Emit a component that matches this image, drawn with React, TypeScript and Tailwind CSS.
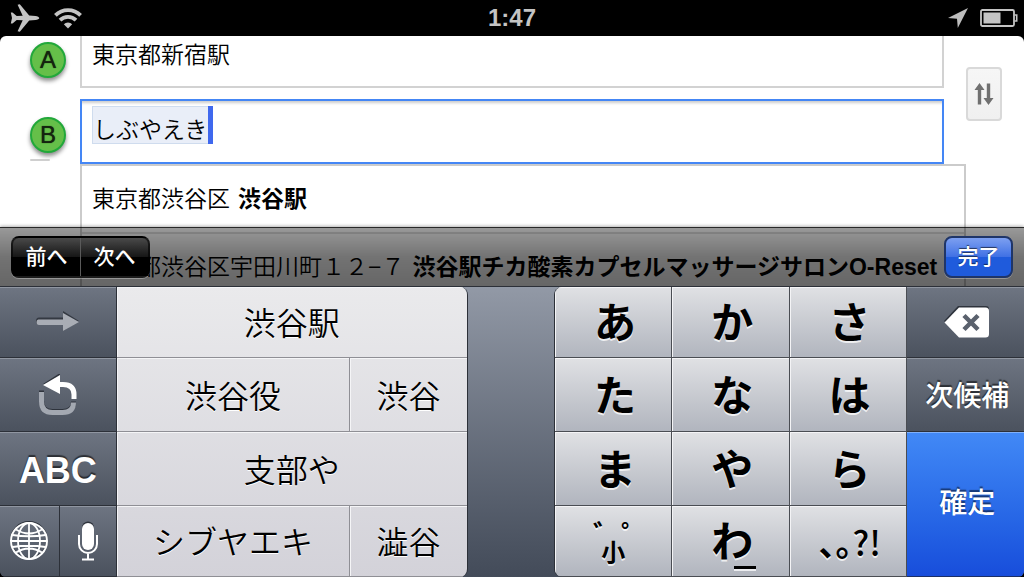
import { useState } from "react";
import type { ReactNode } from "react";
import { clsx } from "clsx";

const SUGGESTIONS = [
  { area: "東京都渋谷区", name: "渋谷駅" },
  {
    area: "東京都渋谷区宇田川町１２−７",
    name: "渋谷駅チカ酸素カプセルマッサージサロンO-Reset",
  },
];

const CANDIDATES = [
  { text: "渋谷駅", wide: true },
  { text: "渋谷役", wide: false },
  { text: "渋谷", wide: false },
  { text: "支部や", wide: true },
  { text: "シブヤエキ", wide: false },
  { text: "澁谷", wide: false },
];

const toneClass = {
  dark: "border-[#2c3038] bg-linear-to-b from-[#6e7582] to-[#4b525e] text-white shadow-[inset_0_1px_0_#9096a1] [text-shadow:0_-2px_1px_rgba(0,0,0,0.55)]",
  light:
    "border-[#4a4d53] bg-linear-to-b from-[#e0e1e4] to-[#b1b5be] text-black shadow-[inset_1px_1px_0_#f4f4f6] [text-shadow:0_2px_0_rgba(255,255,255,0.75)]",
  blue: "border-[#1b2f66] bg-linear-to-b from-[#4289f6] to-[#184ddb] text-white shadow-[inset_0_1px_0_#7fb0fb] [text-shadow:0_-2px_1px_rgba(0,0,0,0.5)]",
};

function Key({
  tone,
  className,
  label,
  children,
}: {
  tone: keyof typeof toneClass;
  className?: string;
  label?: string;
  children: ReactNode;
}) {
  return (
    <button
      type="button"
      aria-label={label}
      className={clsx(
        "relative flex items-center justify-center border-b",
        toneClass[tone],
        className
      )}
    >
      {children}
    </button>
  );
}

function AirplaneIcon() {
  return (
    <svg className="h-7 w-[30px]" viewBox="0 0 30 28" fill="#c4c4c4">
      <path d="M.8 8.500h1.700l4.200 3.400 6-.2L7.600.8 9.800.3l9.400 11.300 6.300.3c2 .2 3.800 1.100 3.800 2.100s-1.800 1.900-3.800 2.100l-6.300.3L9.800 27.700l-2.200-.5 5.100-10.900-6-.2-4.200 3.400H.8L2 14z" />
    </svg>
  );
}

function WifiIcon() {
  return (
    <svg className="h-[22px] w-7" viewBox="0 0 28 22">
      <g fill="none" stroke="#c4c4c4" strokeWidth="3.800">
        <path d="M1.400 8.300a17.800 17.800 0 0 1 25.200 0" />
        <path d="M6 13.200a11.300 11.300 0 0 1 16 0" />
      </g>
      <path d="M14 21.500l-4.200-4.200a5.900 5.900 0 0 1 8.400 0z" fill="#c4c4c4" />
    </svg>
  );
}

function StatusBar() {
  return (
    <header className="grid h-9 shrink-0 grid-cols-3 items-center bg-black px-1.5">
      <div className="flex items-center gap-3.5 pl-1">
        <AirplaneIcon />
        <WifiIcon />
      </div>
      <time className="text-center text-2xl font-bold text-[#c4c4c4]">1:47</time>
      <div className="flex items-center justify-end gap-3">
        <svg className="h-5 w-5" viewBox="0 0 20 20" fill="#bdbdbd">
          <path d="M20 0L9.800 20l-.8-9.300L0 10z" />
        </svg>
        <svg className="h-[18px] w-[38px]" viewBox="0 0 38 18">
          <rect x="1" y="1" width="33" height="16" rx="1.500" fill="none" stroke="#c4c4c4" strokeWidth="1.800" />
          <path d="M34.500 6h2.200v6h-2.200" fill="none" stroke="#c4c4c4" strokeWidth="1.600" />
          <rect x="3.500" y="3.500" width="17" height="11" fill="#c4c4c4" />
        </svg>
      </div>
    </header>
  );
}

function Marker({ letter }: { letter: string }) {
  return (
    <span className="flex size-9 items-center justify-center rounded-full border-2 border-[#22a83a] bg-[#65bf49] text-2xl text-[#14240f] shadow-[0_3px_4px_rgba(0,0,0,0.45)] [text-shadow:0_0_1px_#14240f]">
      {letter}
    </span>
  );
}

function RouteForm() {
  const [from, setFrom] = useState("東京都新宿駅");
  const [to, setTo] = useState("しぶやえき");

  return (
    <form className="flex text-[23px] font-[350]">
      <div className="min-w-0 flex-1">
        <div className="flex">
          <label htmlFor="from" className="flex w-20 justify-center pt-1.5 pl-4">
            <Marker letter="A" />
          </label>
          <input
            id="from"
            value={from}
            onChange={(e) => setFrom(e.target.value)}
            className="h-[52px] min-w-0 flex-1 border-2 border-t-0 border-[#d2d2d2] pb-4 pl-2.5 outline-none"
          />
        </div>
        <div className="mt-[11px] flex">
          <label htmlFor="to" className="flex w-20 flex-col items-center pt-[18px] pl-4">
            <Marker letter="B" />
            <span className="mt-1.5 mr-4 h-0.5 w-5 rounded-full bg-[#cfcfcf]" />
          </label>
          <div className="relative min-w-0 flex-1 border-2 border-[#4486f5] shadow-[inset_0_4px_3px_-2px_rgba(0,0,0,0.2)]">
            {/* marked text while the IME is composing */}
            <span className="absolute top-[5px] left-2.5 h-[38px] w-[121px] bg-[#e9eef8]">
              <span className="block h-full border border-r-0 border-[#cfdcee]" />
              <span className="absolute inset-y-0 right-0 w-[5px] bg-[#3f68ee]" />
            </span>
            <input
              id="to"
              value={to}
              onChange={(e) => setTo(e.target.value)}
              className="relative h-[61px] w-full bg-transparent pb-2 pl-[11px] outline-none"
            />
          </div>
        </div>
      </div>
      <div className="w-20 pt-[31px] pl-[22px]">
        <button
          type="button"
          aria-label="出発地と目的地を入れ替える"
          className="flex h-[54px] w-9 items-center justify-center rounded-sm border-2 border-[#d9d9d9] bg-linear-to-b from-[#f6f6f6] to-[#f0f0f0]"
        >
          <svg className="h-6 w-5" viewBox="0 0 20 24" fill="#707070">
            <path d="M5.500 1l5 7H7.200v14.500H3.800V8H.5zM14.500 23l-5-7h3.300V1.500h3.400V16h3.300z" />
          </svg>
        </button>
      </div>
    </form>
  );
}

function Suggestions() {
  return (
    <ul className="mr-[58px] ml-20 border-2 border-[#cbcbcb] text-[23px] font-[350]">
      {SUGGESTIONS.map((s) => (
        <li
          key={s.name}
          className="flex h-[68px] gap-2 overflow-hidden border-b-2 border-[#dedede] pl-2.5 leading-[66px] whitespace-nowrap"
        >
          <span>{s.area}</span>
          <b>{s.name}</b>
        </li>
      ))}
    </ul>
  );
}

function AccessoryBar() {
  return (
    <div className="absolute inset-x-0 bottom-0 flex h-[59px] items-center justify-between border-t border-black/60 bg-linear-to-b from-black/40 via-black/55 to-black/60 px-[11px] text-[21px] font-medium text-white shadow-[0_-1px_3px_rgba(0,0,0,0.3)]">
      <div className="flex h-[42px] overflow-hidden rounded-lg border-2 border-black/60 bg-linear-to-b from-[#4a4a4a] from-0% via-[#161616] via-50% to-black to-50% shadow-[0_1px_0_rgba(255,255,255,0.3)] [text-shadow:0_-1px_1px_#000]">
        <button type="button" className="w-[68px] border-r border-[#5a5a5a]">
          前へ
        </button>
        <button type="button" className="w-[67px]">
          次へ
        </button>
      </div>
      <button
        type="button"
        className="h-[42px] w-[69px] rounded-lg border-2 border-[#1f3568] bg-linear-to-b from-[#7d9ff0] from-0% via-[#3f70e4] via-50% to-[#1f5bdc] to-50% shadow-[0_1px_0_rgba(255,255,255,0.3)] [text-shadow:0_-1px_1px_rgba(0,0,0,0.6)]"
      >
        完了
      </button>
    </div>
  );
}

function UndoIcon() {
  return (
    <svg className="h-[42px] w-10" viewBox="0 0 40 42" fill="none">
      <path d="M3.500 16.500v10q0 11 11 11h10q11 0 11-10" stroke="#2e333c" strokeWidth="5" />
      <path d="M3.500 18v9.500q0 11 11 11h10q11 0 11-10" stroke="#a3a8b1" strokeWidth="5" />
      <path d="M5 10L22 -1v19z" fill="#2e333c" />
      <path d="M5 11L22 1v19z" fill="#fff" />
      <path d="M20 10.500h5q11 0 11 10V25" stroke="#fff" strokeWidth="5" />
    </svg>
  );
}

function GlobeIcon() {
  return (
    <svg className="size-10" viewBox="0 0 40 40" fill="none" stroke="#fff" strokeWidth="1.800">
      <circle cx="20" cy="19" r="18" stroke="#2e333c" />
      <circle cx="20" cy="20" r="18" strokeWidth="2" />
      <ellipse cx="20" cy="20" rx="11" ry="18" />
      <path d="M20 2v36M2 20h36M7 8.500q13 8 26 0M7 31.500q13-8 26 0M3.500 14q16.500 2.500 33 0M3.500 26q16.500-2.500 33 0" />
    </svg>
  );
}

function MicIcon() {
  return (
    <svg className="h-10 w-6" viewBox="0 0 24 40" fill="none" stroke="#fff" strokeWidth="2">
      <rect x="6" y="0.500" width="12" height="27" rx="6" fill="#2e333c" stroke="none" />
      <rect x="6" y="2" width="12" height="27" rx="6" fill="#fff" stroke="none" />
      <path d="M3 14v9a9 9 0 0 0 18 0v-9M12 32v6M6 38.500h12" />
    </svg>
  );
}

function LeftKeys() {
  return (
    <div className="grid grid-cols-[60fr_57fr_351fr] grid-rows-[71px_74px_74px_71px] overflow-hidden rounded-r-lg border-r border-[#2c3038]">
      <Key tone="dark" label="次の文字" className="col-span-2 border-r">
        <svg className="h-6 w-11" viewBox="0 0 44 24">
          <path d="M3 7.500h24V1l16 10-16 10v-6.500H3q-3 0-3-3.500t3-3.500z" fill="#343942" />
          <path d="M3 9.500h24V3l16 9-16 9v-6H3q-2.500 0-2.500-3t2.500-2.500z" fill="#a9adb5" />
        </svg>
      </Key>
      {/* candidates share one background behind every row */}
      <div className="row-span-4 grid grid-cols-3 grid-rows-subgrid bg-linear-to-b from-[#eaeaec] to-[#d3d2d9] text-[32px] font-[350]">
        {CANDIDATES.map((c, i) => (
          <button
            key={c.text}
            type="button"
            className={clsx(
              "border-b border-[#8f8f95] pt-1 shadow-[inset_1px_1px_0_#f5f5f7] [text-shadow:0_1px_0_#fff]",
              c.wide && "col-span-3",
              !c.wide && i % 3 === 1 && "col-span-2 border-r"
            )}
          >
            {c.text}
          </button>
        ))}
      </div>
      <Key tone="dark" label="戻す" className="col-span-2 border-r">
        <UndoIcon />
      </Key>
      <Key tone="dark" className="col-span-2 border-r pt-1 text-4xl font-bold">
        ABC
      </Key>
      <Key tone="dark" label="地球儀" className="border-r">
        <GlobeIcon />
      </Key>
      <Key tone="dark" label="音声入力" className="border-r">
        <MicIcon />
      </Key>
    </div>
  );
}

function KanaKey({ children }: { children: ReactNode }) {
  return (
    <Key tone="light" className="border-r pt-1 pl-1 text-[42px] leading-none font-bold">
      {children}
    </Key>
  );
}

function RightKeys() {
  return (
    <div className="grid grid-cols-4 grid-rows-[71px_74px_74px_71px] overflow-hidden rounded-l-lg border-l border-[#2c3038]">
      <KanaKey>あ</KanaKey>
      <KanaKey>か</KanaKey>
      <KanaKey>さ</KanaKey>
      <Key tone="dark" label="削除" className="pl-1">
        <svg className="h-8 w-[46px]" viewBox="0 0 46 32">
          <path d="M14 0h28q3 0 3 3v24H14L0 15z" fill="#2e333c" />
          <path d="M15 1.500h26.500q3.500 0 3.500 3.500v23q0 3.500-3.500 3.500H15L.5 16.500z" fill="#fff" />
          <path d="M20 9.500l14 14M34 9.500l-14 14" stroke="#5a616d" strokeWidth="4.500" />
        </svg>
      </Key>
      <KanaKey>た</KanaKey>
      <KanaKey>な</KanaKey>
      <KanaKey>は</KanaKey>
      <Key tone="dark" className="pt-1 pl-1 text-[28px] font-medium">
        次候補
      </Key>
      <KanaKey>ま</KanaKey>
      <KanaKey>や</KanaKey>
      <KanaKey>ら</KanaKey>
      <Key tone="blue" className="row-span-2 pl-1 text-[28px] font-medium">
        確定
      </Key>
      <Key tone="light" className="flex-col border-r">
        <span className="h-6 pl-4 text-[28px] leading-10 font-bold">゛゜</span>
        <span className="text-2xl leading-6 font-bold">小</span>
      </Key>
      <KanaKey>
        わ
        <span className="absolute bottom-[7px] left-1/2 ml-1 h-[3px] w-[22px] bg-black shadow-[0_2px_0_rgba(255,255,255,0.75)]" />
      </KanaKey>
      <Key tone="light" className="border-r pl-1 font-['Noto_Sans_CJK_JP',sans-serif] text-[34px] font-bold">
        <span className="[font-feature-settings:'halt']">、。</span>
        <span className="font-medium">?!</span>
      </Key>
    </div>
  );
}

export default function App() {
  return (
    <div className="flex h-screen flex-col overflow-hidden bg-black font-['Liberation_Sans','Noto_Sans_CJK_JP',sans-serif] text-black">
      <StatusBar />
      <main className="relative min-h-0 flex-1 overflow-hidden rounded-t-md bg-white">
        <RouteForm />
        <Suggestions />
        <AccessoryBar />
      </main>
      <section
        aria-label="キーボード"
        className="grid shrink-0 grid-cols-[468fr_86fr_470fr] overflow-hidden rounded-b-md border-t border-[#2c3038] bg-linear-to-b from-[#9299a6] to-[#434b59]"
      >
        <LeftKeys />
        <div />
        <RightKeys />
      </section>
    </div>
  );
}
